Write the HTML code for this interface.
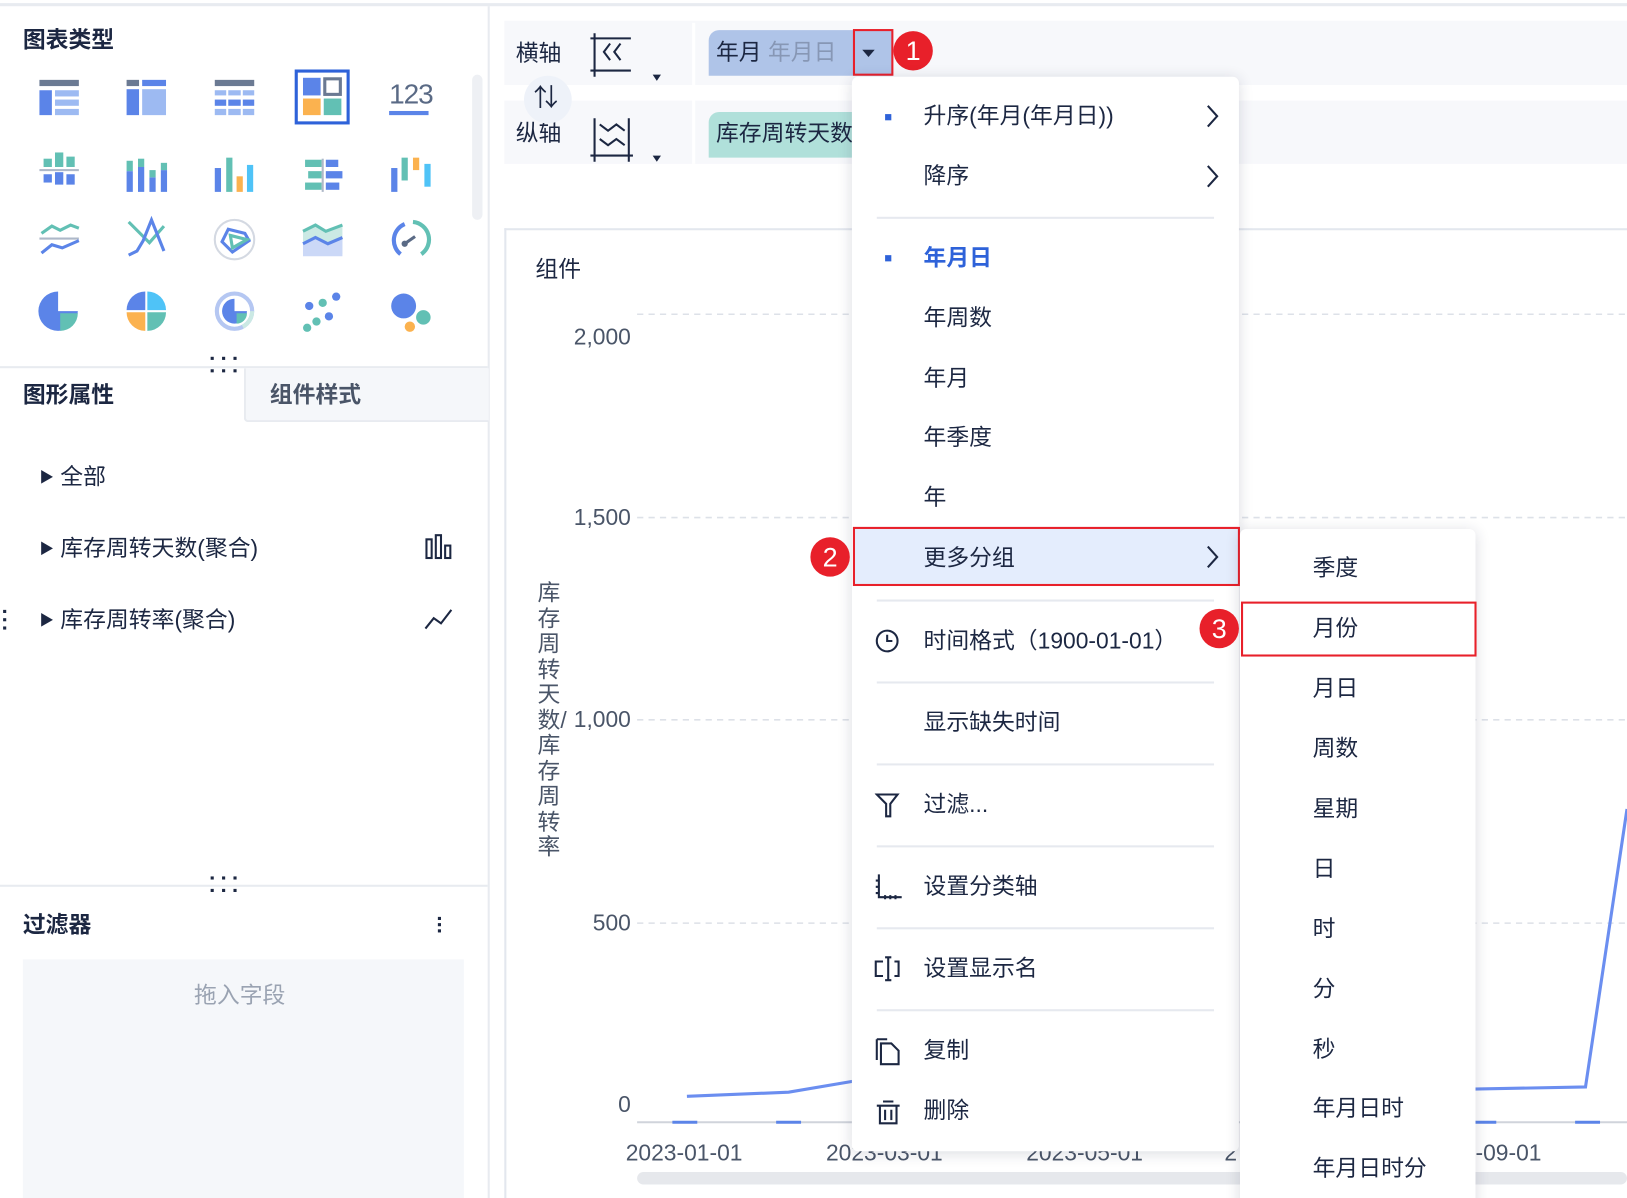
<!DOCTYPE html>
<html><head><meta charset="utf-8"><style>
*{margin:0;padding:0;box-sizing:border-box}
html,body{width:1627px;height:1198px;overflow:hidden;background:#fff}
#w{position:absolute;left:0;top:0;width:1568px;height:1155px;transform:scale(1.03763,1.0372);transform-origin:0 0;font-family:"Liberation Sans","Noto Sans CJK SC",sans-serif;color:#1c2742;overflow:hidden}
.a{position:absolute}
.t{position:absolute;font-size:22px;line-height:30px;white-space:nowrap}
.b{font-weight:bold}
.sep{position:absolute;left:845px;width:325px;height:2px;background:#e6e9ef}
.rc{position:absolute;width:38px;height:38px;border-radius:50%;background:#e8202a;color:#fff;font-size:26px;line-height:38px;text-align:center}
.dots{position:absolute;width:3px;height:3px;background:#1c2742;box-shadow:11px 0 0 #1c2742,22px 0 0 #1c2742,0 12px 0 #1c2742,11px 12px 0 #1c2742,22px 12px 0 #1c2742}
</style></head><body><div id="w">
<div class="a" style="left:0;top:3px;width:1568px;height:3px;background:#e8ebf0"></div>
<div class="a" style="left:470px;top:6px;width:2px;height:1149px;background:#e8ebf0"></div>
<div class="t b" style="left:22px;top:24px">图表类型</div>
<div class="a" style="left:455px;top:72px;width:10px;height:140px;border-radius:5px;background:#eef0f4"></div>
<svg class="a" style="left:0;top:60px" width="470" height="270">
<g transform="translate(38,17)"><rect x="0" y="0" width="38" height="6" fill="#6b7a93"/><rect x="0" y="10" width="12" height="24" fill="#5b84e8"/><rect x="15" y="10" width="23" height="6" fill="#9dbaf2"/><rect x="15" y="19" width="23" height="6" fill="#9dbaf2"/><rect x="15" y="28" width="23" height="6" fill="#9dbaf2"/></g>
<g transform="translate(122,17)"><rect x="0" y="0" width="12" height="6" fill="#6b7a93"/><rect x="15" y="0" width="23" height="6" fill="#5b84e8"/><rect x="0" y="9" width="12" height="25" fill="#5b84e8"/><rect x="15" y="9" width="23" height="25" fill="#9dbaf2"/></g>
<g transform="translate(207,17)"><rect x="0" y="0" width="38" height="6" fill="#6b7a93"/><g fill="#9dbaf2"><rect x="0" y="10" width="11" height="5"/><rect x="13" y="10" width="12" height="5"/><rect x="27" y="10" width="11" height="5"/><rect x="0" y="28" width="11" height="6"/><rect x="13" y="28" width="12" height="6"/><rect x="27" y="28" width="11" height="6"/></g><g fill="#5b84e8"><rect x="0" y="19" width="11" height="6"/><rect x="13" y="19" width="12" height="6"/><rect x="27" y="19" width="11" height="6"/></g></g>
<rect x="285.5" y="8.5" width="50" height="50" fill="none" stroke="#2e62d9" stroke-width="3"/>
<g transform="translate(292,15)"><rect x="0" y="0" width="17" height="17" fill="#5b84e8"/><rect x="21" y="1" width="15" height="15" fill="none" stroke="#6b7a93" stroke-width="3"/><rect x="0" y="20" width="17" height="16" fill="#fbb24f"/><rect x="20" y="20" width="17" height="16" fill="#62c0b4"/></g>
<text x="375" y="40" font-family="Liberation Sans" font-size="27" fill="#5a6a85" letter-spacing="-1">123</text>
<rect x="375" y="47" width="38" height="4" fill="#5b84e8"/>
<g transform="translate(38,87)"><rect x="4" y="6" width="8" height="8" fill="#62c0b4"/><rect x="15" y="0" width="8" height="14" fill="#62c0b4"/><rect x="26" y="4" width="8" height="10" fill="#62c0b4"/><rect x="0" y="16" width="38" height="2" fill="#aeb8c8"/><rect x="4" y="21" width="8" height="8" fill="#5b84e8"/><rect x="15" y="19" width="8" height="12" fill="#5b84e8"/><rect x="26" y="21" width="8" height="10" fill="#5b84e8"/></g>
<g transform="translate(122,93)"><rect x="0" y="12" width="6" height="20" fill="#5b84e8"/><rect x="0" y="2" width="6" height="10" fill="#62c0b4"/><rect x="11" y="8" width="6" height="24" fill="#5b84e8"/><rect x="11" y="0" width="6" height="8" fill="#62c0b4"/><rect x="22" y="18" width="6" height="14" fill="#5b84e8"/><rect x="22" y="11" width="6" height="7" fill="#62c0b4"/><rect x="33" y="11" width="6" height="21" fill="#5b84e8"/><rect x="33" y="4" width="6" height="7" fill="#62c0b4"/></g>
<g transform="translate(207,92)"><rect x="0" y="10" width="6" height="23" fill="#5b84e8"/><rect x="11" y="0" width="6" height="33" fill="#62c0b4"/><rect x="21" y="18" width="6" height="15" fill="#fbb24f"/><rect x="31" y="7" width="6" height="26" fill="#4fc3f7"/></g>
<g transform="translate(292,94)"><rect x="2" y="0" width="16" height="7" fill="#62c0b4"/><rect x="5" y="11" width="13" height="7" fill="#62c0b4"/><rect x="2" y="22" width="16" height="7" fill="#62c0b4"/><rect x="18" y="-1" width="2" height="32" fill="#aeb8c8"/><rect x="22" y="0" width="12" height="7" fill="#5b84e8"/><rect x="22" y="11" width="16" height="7" fill="#5b84e8"/><rect x="22" y="22" width="13" height="7" fill="#5b84e8"/></g>
<g transform="translate(377,92)"><rect x="0" y="10" width="6" height="23" fill="#5b84e8"/><rect x="10" y="0" width="6" height="22" fill="#62c0b4"/><rect x="21" y="0" width="6" height="12" fill="#fbb24f"/><rect x="32" y="6" width="6" height="22" fill="#4fc3f7"/></g>
<g transform="translate(38,155)" fill="none" stroke-width="3"><path d="M2 10 L12 3 L20 7 L30 2 L38 5" stroke="#62c0b4"/><path d="M0 15 H38" stroke="#aeb8c8" stroke-width="2"/><path d="M2 29 L12 21 L22 24 L38 17" stroke="#5b84e8"/></g>
<g transform="translate(122,150)" fill="none" stroke-width="3"><path d="M2 4 L22 24 L36 8" stroke="#62c0b4"/><path d="M2 36 L10 32 L16 22 L24 2 L36 32" stroke="#5b84e8"/></g>
<g transform="translate(206,151)" fill="none"><circle cx="20" cy="20" r="19" stroke="#d4d9e2" stroke-width="2"/><path d="M14 10 L30 14 L34 21 L18 32 L8 22 Z" stroke="#5b84e8" stroke-width="3"/><path d="M16 16 L32 20 L18 28 Z" stroke="#62c0b4" stroke-width="3"/></g>
<g transform="translate(292,153)"><path d="M0 10 L12 4 L22 10 L38 4 V32 H0Z" fill="#cbe9e4"/><path d="M0 10 L12 4 L22 10 L38 4" fill="none" stroke="#62c0b4" stroke-width="3"/><path d="M0 22 L12 16 L24 22 L38 16 V34 H0Z" fill="#cbd8f7"/><path d="M0 22 L12 16 L24 22 L38 16" fill="none" stroke="#5b84e8" stroke-width="3"/></g>
<g transform="translate(376,151)" fill="none" stroke-width="4"><path d="M10 34 A17 17 0 0 1 14 5" stroke="#5b84e8"/><path d="M22 3 A17 17 0 0 1 30 34" stroke="#62c0b4"/><path d="M14 24 L24 17" stroke="#5a6a85" stroke-width="3"/><circle cx="14" cy="24" r="3" fill="#5a6a85" stroke="none"/></g>
<g transform="translate(56,240)"><path d="M0 -19 A19 19 0 1 0 19 0 H0Z" fill="#5b84e8"/><path d="M2 2 H19 A17 17 0 0 1 2 19Z" fill="#62c0b4"/></g>
<g transform="translate(141,240)"><path d="M-1 -1 V-19 A18 18 0 0 0 -19 -1Z" fill="#5b84e8"/><path d="M1 -1 V-19 A18 18 0 0 1 19 -1Z" fill="#4fc3f7"/><path d="M-1 1 H-19 A18 18 0 0 0 -1 19Z" fill="#fbb24f"/><path d="M1 1 H19 A18 18 0 0 1 1 19Z" fill="#62c0b4"/></g>
<g transform="translate(226,240)"><circle r="17" fill="none" stroke="#b5c7f2" stroke-width="4"/><path d="M8 15 A17 17 0 0 0 17 0" fill="none" stroke="#cbe9e4" stroke-width="4"/><path d="M0 -12 A12 12 0 1 0 12 0 H0Z" fill="#5b84e8"/><path d="M2 2 H12 A10 10 0 0 1 2 12Z" fill="#62c0b4"/></g>
<g transform="translate(292,222)"><circle cx="32" cy="4" r="4" fill="#5b84e8"/><circle cx="19" cy="10" r="4" fill="#62c0b4"/><circle cx="6" cy="13" r="4" fill="#5b84e8"/><circle cx="25" cy="23" r="4" fill="#5b84e8"/><circle cx="13" cy="28" r="4" fill="#62c0b4"/><circle cx="4" cy="34" r="4" fill="#62c0b4"/></g>
<g transform="translate(377,223)"><circle cx="12" cy="12" r="12" fill="#5b84e8"/><circle cx="31" cy="23" r="7" fill="#62c0b4"/><circle cx="18" cy="32" r="5" fill="#fbb24f"/></g>
</svg>
<div class="dots" style="left:203px;top:344px"></div>
<div class="a" style="left:0;top:353px;width:470px;height:2px;background:#e8ebf0"></div>
<div class="t b" style="left:22px;top:366px">图形属性</div>
<div class="a" style="left:235px;top:355px;width:236px;height:52px;background:#f5f7fa;border-left:2px solid #e8ebf0;border-bottom:2px solid #e8ebf0;border-bottom-left-radius:4px"></div>
<div class="t b" style="left:260px;top:366px;color:#4a5568">组件样式</div>
<div class="t" style="left:38px;top:445px"><span style="font-size:14px;vertical-align:2px">▶</span> 全部</div>
<div class="t" style="left:38px;top:514px"><span style="font-size:14px;vertical-align:2px">▶</span> 库存周转天数(聚合)</div>
<div class="t" style="left:38px;top:583px"><span style="font-size:14px;vertical-align:2px">▶</span> 库存周转率(聚合)</div>
<svg class="a" style="left:408px;top:514px" width="30" height="30" fill="none" stroke="#1c2742" stroke-width="2"><rect x="3" y="6" width="5" height="18"/><rect x="12" y="2" width="5" height="22"/><rect x="21" y="12" width="5" height="12"/></svg>
<svg class="a" style="left:408px;top:584px" width="30" height="28" fill="none" stroke="#1c2742" stroke-width="2"><path d="M2 22 L10 12 L17 17 L27 4"/></svg>
<div class="a" style="left:3px;top:588px;width:3px;height:3px;background:#1c2742;box-shadow:0 8px 0 #1c2742,0 16px 0 #1c2742"></div>
<div class="dots" style="left:203px;top:845px"></div>
<div class="a" style="left:0;top:853px;width:470px;height:2px;background:#e8ebf0"></div>
<div class="t b" style="left:22px;top:877px">过滤器</div>
<div class="a" style="left:422px;top:884px;width:3px;height:3px;background:#1c2742;box-shadow:0 6px 0 #1c2742,0 12px 0 #1c2742"></div>
<div class="a" style="left:22px;top:925px;width:425px;height:235px;background:#f5f7fa"></div>
<div class="t" style="left:187px;top:945px;color:#9aa3b2">拖入字段</div>
<div class="a" style="left:486px;top:20px;width:1082px;height:62px;background:#f7f8fb"></div>
<div class="a" style="left:486px;top:97px;width:1082px;height:61px;background:#f7f8fb"></div>
<div class="a" style="left:667px;top:22px;width:3px;height:136px;background:#fff"></div>
<div class="t" style="left:497px;top:37px">横轴</div>
<div class="t" style="left:497px;top:114px">纵轴</div>
<svg class="a" style="left:566px;top:28px" width="80" height="140" fill="none" stroke="#1c2742" stroke-width="2">
<path d="M7 4 V46 M3 40 H42 M3 9 H42"/><path d="M22 14 L16 22 L22 30 M32 14 L26 22 L32 30"/>
<path d="M7 86 V128 M3 122 H44 M40 86 V128 M12 92 L20 98 L28 92 L36 98 M12 106 L20 112 L28 106 L36 112"/>
<path d="M63 44 L71 44 L67 50Z M63 122 L71 122 L67 128Z" fill="#1c2742" stroke="none"/>
</svg>
<div class="a" style="left:505px;top:73px;width:46px;height:46px;border-radius:50%;background:#eef2f9"></div>
<div class="t" style="left:514px;top:80px;font-size:24px">⇅</div>
<div class="a" style="left:683px;top:29px;width:177px;height:44px;background:#afc4e8;border-radius:10px 0 0 0"></div>
<div class="t" style="left:690px;top:36px">年月 <span style="color:#8797b5">年月日</span></div>
<div class="a" style="left:822px;top:28px;width:39px;height:45px;border:2px solid #e8202a"></div>
<div class="a" style="left:831px;top:48px;width:0;height:0;border-left:6px solid transparent;border-right:6px solid transparent;border-top:7px solid #1c2742"></div>
<div class="rc" style="left:861px;top:30px">1</div>
<div class="a" style="left:683px;top:108px;width:150px;height:44px;background:#b0e0da;border-radius:10px 0 0 0"></div>
<div class="t" style="left:690px;top:114px">库存周转天数</div>
<div class="a" style="left:486px;top:220px;width:1082px;height:940px;border-left:2px solid #e3e7ee;border-top:2px solid #e3e7ee"></div>
<div class="t" style="left:516px;top:245px">组件</div>
<div class="t" style="left:518px;top:560px;width:24px;white-space:normal;line-height:24.5px;font-size:22px;color:#4a5568">库存周转天数/库存周转率</div>
<div class="t" style="left:540px;top:310px;width:68px;text-align:right;color:#4a5568">2,000</div>
<div class="t" style="left:540px;top:484px;width:68px;text-align:right;color:#4a5568">1,500</div>
<div class="t" style="left:540px;top:679px;width:68px;text-align:right;color:#4a5568">1,000</div>
<div class="t" style="left:540px;top:875px;width:68px;text-align:right;color:#4a5568">500</div>
<div class="t" style="left:540px;top:1050px;width:68px;text-align:right;color:#4a5568">0</div>
<svg class="a" style="left:600px;top:290px" width="968" height="870">
<g stroke="#dde1e8" stroke-width="1.5" stroke-dasharray="6,5"><path d="M14 13 H968 M14 209 H968 M14 404 H968 M14 600 H968"/></g>
<path d="M14 792 H968" stroke="#d0d4db" stroke-width="2"/>
<g stroke="#5b84e8" stroke-width="3"><path d="M48 792 H72 M148 792 H172 M818 792 H842 M918 792 H942"/></g>
<path d="M62 767 L160 763 L225 752" fill="none" stroke="#6b8ef0" stroke-width="3"/>
<path d="M820 760 L928 758 L968 490" fill="none" stroke="#6b8ef0" stroke-width="3"/>
<rect x="14" y="840" width="954" height="12" rx="6" fill="#e6e8ec"/>
</svg>
<div class="t" style="left:603px;top:1097px;color:#4a5568">2023-01-01</div>
<div class="t" style="left:796px;top:1097px;color:#4a5568">2023-03-01</div>
<div class="t" style="left:989px;top:1097px;color:#4a5568">2023-05-01</div>
<div class="t" style="left:1180px;top:1097px;color:#4a5568">2</div>
<div class="t" style="left:1422px;top:1097px;color:#4a5568">-09-01</div>
<div class="a" style="left:821px;top:74px;width:373px;height:1036px;background:#fff;border-radius:6px;box-shadow:0 2px 14px rgba(30,40,70,.16)"></div>
<div class="a" style="left:853px;top:110px;width:6px;height:6px;background:#2e62d9"></div>
<div class="t" style="left:890px;top:97px">升序(年月(年月日))</div>
<div class="t" style="left:890px;top:155px">降序</div>
<svg class="a" style="left:1160px;top:98px" width="20" height="90" fill="none" stroke="#1c2742" stroke-width="2"><path d="M4 4 L13 14 L4 24 M4 62 L13 72 L4 82"/></svg>
<div class="sep" style="top:209px"></div>
<div class="a" style="left:853px;top:246px;width:6px;height:6px;background:#2e62d9"></div>
<div class="t b" style="left:890px;top:234px;color:#2e62d9">年月日</div>
<div class="t" style="left:890px;top:292px">年周数</div>
<div class="t" style="left:890px;top:350px">年月</div>
<div class="t" style="left:890px;top:407px">年季度</div>
<div class="t" style="left:890px;top:465px">年</div>
<div class="a" style="left:822px;top:508px;width:373px;height:57px;background:#e4edfd;border:2px solid #e8202a"></div>
<div class="t" style="left:890px;top:523px">更多分组</div>
<svg class="a" style="left:1160px;top:525px" width="20" height="30" fill="none" stroke="#1c2742" stroke-width="2"><path d="M4 2 L13 12 L4 22"/></svg>
<div class="rc" style="left:781px;top:518px">2</div>
<div class="sep" style="top:578px"></div>
<svg class="a" style="left:843px;top:606px" width="26" height="26" fill="none" stroke="#1c2742" stroke-width="2"><circle cx="12" cy="12" r="10"/><path d="M12 6 V12 H17"/></svg>
<div class="t" style="left:890px;top:603px">时间格式（1900-01-01）</div>
<div class="sep" style="top:657px"></div>
<div class="t" style="left:890px;top:682px">显示缺失时间</div>
<div class="sep" style="top:736px"></div>
<svg class="a" style="left:843px;top:763px" width="26" height="26" fill="none" stroke="#1c2742" stroke-width="2"><path d="M2 3 H22 L15 12 V24 H11 V12 Z"/></svg>
<div class="t" style="left:890px;top:761px">过滤...</div>
<div class="sep" style="top:815px"></div>
<svg class="a" style="left:843px;top:841px" width="28" height="28" fill="none" stroke="#1c2742" stroke-width="2"><path d="M4 2 V24 H26 M1 8 H5 M1 14 H5 M1 20 H5 M10 22 V26 M15 22 V26 M20 22 V26"/></svg>
<div class="t" style="left:890px;top:840px">设置分类轴</div>
<div class="sep" style="top:894px"></div>
<svg class="a" style="left:842px;top:920px" width="30" height="28" fill="none" stroke="#1c2742" stroke-width="2"><path d="M9 7 H2 V21 H9 M20 7 H24 V21 H20 M14 3 V25 M11 3 H17 M11 25 H17"/></svg>
<div class="t" style="left:890px;top:919px">设置显示名</div>
<div class="sep" style="top:973px"></div>
<svg class="a" style="left:843px;top:1000px" width="28" height="28" fill="none" stroke="#1c2742" stroke-width="2"><path d="M2 2 H12 M2 2 V22 M6 6 H16 L23 13 V26 H6 Z"/></svg>
<div class="t" style="left:890px;top:998px">复制</div>
<svg class="a" style="left:843px;top:1058px" width="28" height="28" fill="none" stroke="#1c2742" stroke-width="2"><path d="M8 4 H18 M2 8 H24 M5 8 V25 H21 V8 M10 12 V22 M16 12 V22"/></svg>
<div class="t" style="left:890px;top:1056px">删除</div>
<div class="a" style="left:1195px;top:510px;width:227px;height:660px;background:#fff;border-radius:6px;box-shadow:0 2px 14px rgba(30,40,70,.16)"></div>
<div class="t" style="left:1265px;top:533px">季度</div>
<div class="a" style="left:1196px;top:580px;width:227px;height:53px;border:2px solid #e8202a"></div>
<div class="t" style="left:1265px;top:591px">月份</div>
<div class="rc" style="left:1156px;top:587px">3</div>
<div class="t" style="left:1265px;top:649px">月日</div>
<div class="t" style="left:1265px;top:707px">周数</div>
<div class="t" style="left:1265px;top:765px">星期</div>
<div class="t" style="left:1265px;top:823px">日</div>
<div class="t" style="left:1265px;top:881px">时</div>
<div class="t" style="left:1265px;top:939px">分</div>
<div class="t" style="left:1265px;top:997px">秒</div>
<div class="t" style="left:1265px;top:1054px">年月日时</div>
<div class="t" style="left:1265px;top:1112px">年月日时分</div>
</div></body></html>
